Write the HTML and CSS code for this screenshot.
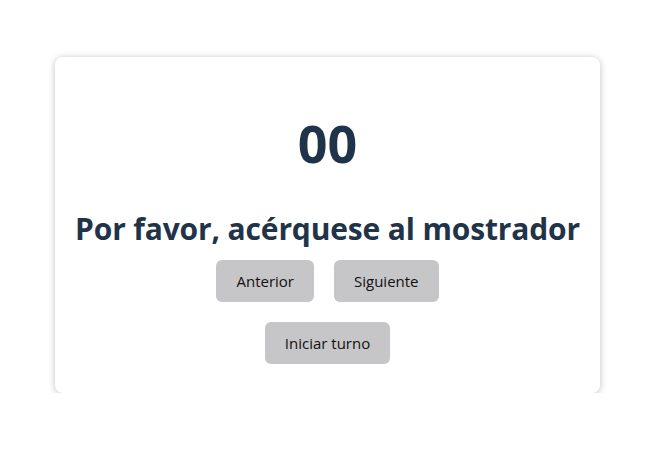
FILE: index.html
```html
<!DOCTYPE html>
<html lang="es">
<head>
<meta charset="utf-8">
<title>Turnos</title>
<link rel="stylesheet" href="styles.css">
</head>
<body>
<main class="page">
  <section class="card">
    <h1 class="number">00</h1>
    <h2 class="message">Por favor, acérquese al mostrador</h2>
    <div class="row">
      <button class="btn">Anterior</button>
      <button class="btn">Siguiente</button>
    </div>
    <div class="row">
      <button class="btn">Iniciar turno</button>
    </div>
  </section>
</main>
</body>
</html>
```

FILE: styles.css
```css
html, body {
  margin: 0;
  padding: 0;
  background: #ffffff;
}
body {
  font-family: "Open Sans", "Noto Sans", sans-serif;
  color: #1f3448;
}
.page {
  display: flex;
  justify-content: center;
  padding-top: 57px;
  padding-right: 2px;
}
.card {
  width: 545px;
  height: 336px;
  box-sizing: border-box;
  background: #fff;
  border-radius: 8px;
  box-shadow: 0 1px 7px rgba(0, 0, 0, 0.25);
  display: flex;
  flex-direction: column;
  align-items: center;
  padding-top: 50px;
}
.number {
  margin: 0;
  font-size: 52px;
  line-height: 72px;
  font-weight: 700;
}
.message {
  margin: 30px 0 0;
  font-size: 30px;
  line-height: 40px;
  font-weight: 700;
  letter-spacing: -0.15px;
}
.row {
  display: flex;
  gap: 20px;
  margin-top: 20px;
}
.message + .row {
  margin-top: 11px;
}
.btn {
  font-family: inherit;
  font-size: 15px;
  color: #111;
  background: #c6c5c7;
  border: none;
  border-radius: 6px;
  height: 42px;
  padding: 0 20px;
}
```
